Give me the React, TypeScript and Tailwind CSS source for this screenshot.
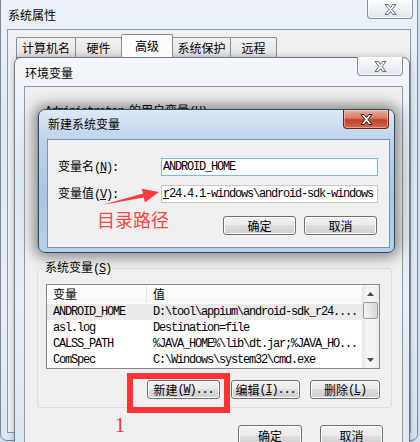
import React from "react";

const cjk = "font-['Noto_Sans_CJK_SC',sans-serif]";
const mono = "font-['Liberation_Mono',monospace] tracking-[-1.2px]";

function XGlyph({ active }: { active?: boolean }) {
  return (
    <svg width="13" height="11" viewBox="0 0 13 11">
      <path
        d="M1 0.5h3.2l2.3 2.9l2.3-2.9h3.2l-3.9 5l3.9 5h-3.2l-2.3-2.9l-2.3 2.9h-3.2l3.9-5z"
        fill={active ? "#ffffff" : "#f6f8fa"}
        stroke={active ? "#40150d" : "#5d6a7b"}
        strokeWidth="1"
        strokeLinejoin="round"
      />
    </svg>
  );
}

function CloseInactive() {
  return (
    <div className="w-[46px] h-[19px] rounded-b-[4px] border border-t-0 border-[#8391a3] bg-[linear-gradient(180deg,#fbfcfd,#e2e8ef)] flex items-center justify-center shadow-[inset_0_0_0_1px_rgba(255,255,255,0.7)]">
      <XGlyph />
    </div>
  );
}

function CloseActive() {
  return (
    <div className="w-[46px] h-[19px] rounded-b-[4px] border border-t-0 border-[#6a2418] bg-[linear-gradient(180deg,#eab0a2_0%,#d77a66_45%,#c2402a_55%,#d2694f_100%)] flex items-center justify-center shadow-[inset_0_0_0_1px_rgba(255,220,210,0.5)]">
      <XGlyph active />
    </div>
  );
}

function Btn({ className, children }: { className: string; children: React.ReactNode }) {
  return (
    <div
      className={
        "flex items-center justify-center rounded-[3px] border border-[#707070] bg-[linear-gradient(180deg,#f2f2f2_0%,#ebebeb_50%,#dddddd_50%,#cfcfcf_100%)] shadow-[inset_0_0_0_1px_#fcfcfc] text-[12px] leading-[14px] text-black " +
        cjk +
        " " +
        className
      }
    >
      {children}
    </div>
  );
}

function Acc({ pre, k, post }: { pre: string; k: string; post: string }) {
  return (
    <>
      {pre}
      <span className={mono}>
        (<span className="underline">{k}</span>){post}
      </span>
    </>
  );
}

const rows: [string, string][] = [
  ["ANDROID_HOME", "D:\\tool\\appium\\android-sdk_r24...."],
  ["asl.log", "Destination=file"],
  ["CALSS_PATH", "%JAVA_HOME%\\lib\\dt.jar;%JAVA_HO..."],
  ["ComSpec", "C:\\Windows\\system32\\cmd.exe"],
];

function Tab({ className, selected, children }: { className: string; selected?: boolean; children: React.ReactNode }) {
  return (
    <div
      className={
        "flex items-center justify-center border border-b-0 border-[#898c95] text-[12px] leading-[14px] text-black " +
        cjk +
        " " +
        (selected
          ? "h-[23px] bg-[#fcfcfc] rounded-t-[2px] z-10"
          : "h-[20px] bg-[linear-gradient(180deg,#f3f3f3,#e2e2e2)] rounded-t-[2px]") +
        " " +
        className
      }
    >
      {children}
    </div>
  );
}

export default function App() {
  return (
    <div className="relative w-[420px] h-[442px] overflow-hidden bg-[#d3dfeb]">
      {/* 系统属性 outer window */}
      <div className="absolute left-0 top-[-8px] w-[418px] h-[449px] rounded-[7px] border border-[#7b8797] bg-[linear-gradient(180deg,#eef3f9_0%,#dde8f3_30%,#e7eef6_70%,#dbe6f1_100%)] flex flex-col">
        <div className="h-[36px] flex items-start justify-between">
          <div className={"pt-[15px] pl-[7px] text-[12px] leading-[14px] text-black " + cjk}>系统属性</div>
          <div className="mt-[7px] mr-[4px]">
            <CloseInactive />
          </div>
        </div>
        <div className="mx-[6px] h-[404px] border border-[#8b98a8] bg-[#f0f0f0] flex flex-col">
          <div className="h-[27px] pl-[8px] flex items-end">
            <Tab className="w-[60px]">计算机名</Tab>
            <Tab className="w-[47px] -ml-px">硬件</Tab>
            <Tab className="w-[52px] -ml-px" selected>高级</Tab>
            <Tab className="w-[59px] -ml-px">系统保护</Tab>
            <Tab className="w-[47px] -ml-px">远程</Tab>
          </div>
          <div className="ml-[8px] mr-[8px] mb-[1px] flex-1 border border-[#898c95] bg-[#fcfcfc]" />
        </div>
      </div>

      {/* 环境变量 window */}
      <div className="absolute left-[14px] top-[57px] w-[396px] h-[400px] rounded-[7px] border border-[#6c7b8d] bg-[linear-gradient(180deg,#f4f8fc_0%,#dfe9f3_30%,#e8eff7_60%,#dde7f1_100%)] shadow-[0_0_6px_rgba(0,0,0,0.25)] flex flex-col">
        <div className="h-[28px] flex items-start justify-between">
          <div className={"pt-[8px] pl-[10px] text-[12px] leading-[14px] text-black " + cjk}>环境变量</div>
          <div className="-mt-px mr-[6px]">
            <CloseInactive />
          </div>
        </div>
        <div className="ml-[9px] mr-[6px] flex-1 border border-[#8e9bab] bg-[#f0f0f0] flex flex-col">
          <fieldset className="mt-[16px] ml-[12px] mr-[10px] h-[147px] border border-[#d5dfe5] rounded-[3px]">
            <legend className={"ml-[5px] px-[2px] text-[12px] leading-[14px] text-black " + cjk}>
              <span className={mono}>Administrator </span>的用户变量<span className={mono}>(<span className="underline">U</span>)</span>
            </legend>
          </fieldset>
          <fieldset className="mt-[10px] ml-[12px] mr-[10px] h-[148px] border border-[#d5dfe5] rounded-[3px]">
            <legend className={"ml-[5px] px-[2px] text-[12px] leading-[14px] text-black " + cjk}>
              <Acc pre="系统变量" k="S" post="" />
            </legend>
            <div className="flex flex-col">
              <div className="mt-[8px] ml-[8px] w-[334px] h-[85px] border border-[#828790] bg-white flex overflow-hidden">
                <div className="flex-1 flex flex-col">
                  <div className={"h-[23px] flex items-center text-[12px] leading-[14px] text-black bg-[linear-gradient(180deg,#ffffff,#f7f8fa)] " + cjk}>
                    <div className="w-[100px] h-full flex items-center pl-[6px] border-r border-[#e3e6ea]">变量</div>
                    <div className="pl-[6px]">值</div>
                  </div>
                  <div className="pt-[1px] flex flex-col">
                    {rows.map(([a, b], i) => (
                      <div
                        key={a}
                        className={"h-[16px] flex items-center text-[12px] leading-[14px] text-black whitespace-nowrap " + (i === 0 ? "bg-[#ebebeb]" : "")}
                      >
                        <div className={"w-[100px] pl-[6px] " + mono}>{a}</div>
                        <div className={"pl-[6px] " + mono}>{b}</div>
                      </div>
                    ))}
                  </div>
                </div>
                <div className="w-[17px] flex flex-col bg-[linear-gradient(90deg,#e6e6e6,#f3f3f3_30%,#f3f3f3_70%,#e9e9e9)]">
                  <div className="h-[17px] flex items-center justify-center">
                    <svg width="7" height="4" viewBox="0 0 7 4"><path d="M0 4L3.5 0L7 4Z" fill="#4a4a4a" /></svg>
                  </div>
                  <div className="h-[17px] mx-px rounded-[2px] border border-[#9a9a9a] bg-[linear-gradient(90deg,#f4f4f4,#e6e6e6_50%,#d6d6d6)]" />
                  <div className="flex-1" />
                  <div className="h-[17px] flex items-center justify-center">
                    <svg width="7" height="4" viewBox="0 0 7 4"><path d="M0 0L3.5 4L7 0Z" fill="#4a4a4a" /></svg>
                  </div>
                </div>
              </div>
              <div className="mt-[11px] pr-[11px] flex justify-end">
                <Btn className="w-[73px] h-[19px]">
                  <Acc pre="新建" k="W" post="..." />
                </Btn>
                <Btn className="ml-[11px] w-[69px] h-[19px]">
                  <Acc pre="编辑" k="I" post="..." />
                </Btn>
                <Btn className="ml-[10px] w-[70px] h-[19px]">
                  <Acc pre="删除" k="L" post="" />
                </Btn>
              </div>
            </div>
          </fieldset>
          <div className="mt-[17px] pr-[19px] flex justify-end">
            <Btn className="w-[64px] h-[22px]">确定</Btn>
            <Btn className="ml-[18px] w-[63px] h-[22px]">取消</Btn>
          </div>
        </div>
      </div>

      {/* 新建系统变量 dialog */}
      <div className="absolute left-[38px] top-[109px] w-[357px] h-[144px] rounded-[7px] border border-[#2f4a66] bg-[linear-gradient(180deg,#dde9f6_0%,#bcd3eb_22%,#a9c5e3_60%,#b7d0ea_100%)] shadow-[0_0_14px_4px_rgba(0,0,0,0.45)] flex flex-col">
        <div className="h-[29px] flex items-start justify-between">
          <div className={"pt-[7px] pl-[9px] text-[12px] leading-[14px] text-black " + cjk}>新建系统变量</div>
          <div className="mr-[5px]">
            <CloseActive />
          </div>
        </div>
        <div className="ml-[8px] mr-[4px] mb-[4px] flex-1 border border-[#7a93b0] bg-[#f0f0f0] flex flex-col">
          <div className="mt-[18px] h-[18px] flex items-center">
            <div className={"ml-[10px] w-[103px] text-[12px] leading-[14px] text-black " + cjk}>
              <Acc pre="变量名" k="N" post=":" />
            </div>
            <div className="w-[217px] h-[18px] border border-[#7eb4ea] bg-white flex items-center pl-[1px]">
              <span className={"text-[12px] leading-[14px] text-black " + mono}>ANDROID_HOME</span>
            </div>
          </div>
          <div className="mt-[9px] h-[18px] flex items-center">
            <div className={"ml-[10px] w-[103px] text-[12px] leading-[14px] text-black " + cjk}>
              <Acc pre="变量值" k="V" post=":" />
            </div>
            <div className="w-[217px] h-[18px] border border-[#c5c9d0] bg-white flex items-center pl-[1px] overflow-hidden">
              <span className={"text-[12px] leading-[14px] text-black whitespace-nowrap " + mono}>
                <span className="underline">r</span>24.4.1-windows\android-sdk-windows
              </span>
            </div>
          </div>
          <div className="mt-[13px] pr-[12px] flex justify-end">
            <Btn className="w-[73px] h-[19px]">确定</Btn>
            <Btn className="ml-[8px] w-[73px] h-[19px]">取消</Btn>
          </div>
        </div>
      </div>

      {/* annotations */}
      <svg className="absolute left-0 top-0" width="420" height="442" viewBox="0 0 420 442">
        <polygon points="102,205 143,193.6 141.8,188.8 159,192 144.9,202.4 143.8,197.6" fill="#ff3b3b" />
      </svg>
      <div className={"absolute left-[97px] top-[208px] text-[18px] leading-[22px] text-[#ff4646] " + cjk}>目录路径</div>
      <div className="absolute left-[127px] top-[373px] w-[103px] h-[40px] border-[6px] border-[#fd3434]" />
      <div className="absolute left-[115px] top-[414px] text-[20px] leading-[22px] text-[#ff3030] font-['Liberation_Serif',serif]">1</div>
    </div>
  );
}
